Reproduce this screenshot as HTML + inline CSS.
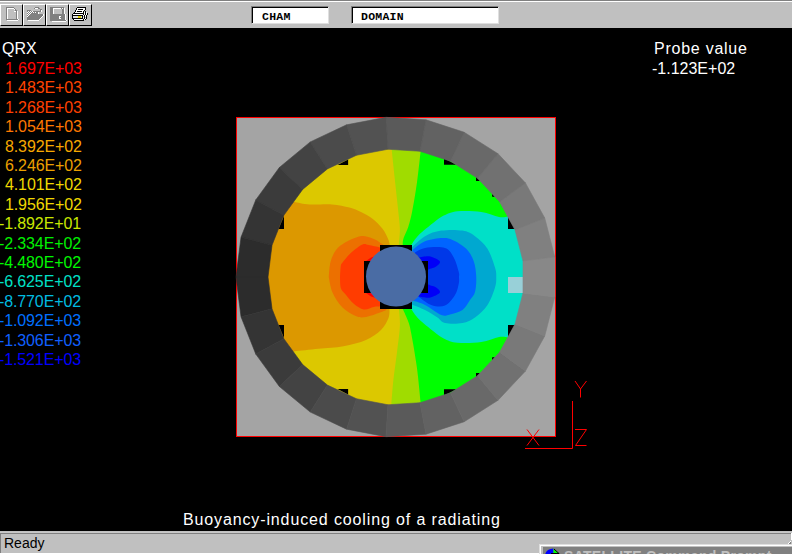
<!DOCTYPE html>
<html><head><meta charset="utf-8"><style>
html,body{margin:0;padding:0;}
body{width:792px;height:554px;background:#000;position:relative;overflow:hidden;font-family:"Liberation Sans",sans-serif;}
.abs{position:absolute;}
#tb{position:absolute;left:0;top:0;width:792px;height:28px;background:#c0c0c0;}
.btn{position:absolute;top:4px;width:23px;height:22px;background:#c0c0c0;box-sizing:border-box;border-top:1px solid #fff;border-left:1px solid #fff;border-right:1px solid #000;border-bottom:1px solid #000;}
.fld{position:absolute;top:6px;height:18px;box-sizing:border-box;background:#fff;border-top:1px solid #808080;border-left:1px solid #808080;border-right:1px solid #dfdfdf;border-bottom:1px solid #dfdfdf;}
.fld .in{position:absolute;left:0;top:0;right:0;bottom:0;border-top:1px solid #000;border-left:1px solid #000;}
.fld span{position:absolute;top:3px;font-family:"Liberation Mono",monospace;font-weight:bold;font-size:11.5px;letter-spacing:0.25px;line-height:14px;color:#000;}
.lg{position:absolute;font-size:16px;line-height:18px;white-space:nowrap;letter-spacing:-0.12px;}
.wt{position:absolute;color:#fff;font-size:16px;line-height:18px;white-space:nowrap;}
#sb{position:absolute;left:0;top:531px;width:792px;height:23px;background:#c0c0c0;}
</style></head><body>
<div id="tb">
 <div class="abs" style="left:0;top:0;width:792px;height:1px;background:#808080"></div>
 <div class="abs" style="left:0;top:1px;width:792px;height:1px;background:#fff"></div>
 <div class="btn" style="left:0"></div>
 <div class="btn" style="left:23px"></div>
 <div class="btn" style="left:46px"></div>
 <div class="btn" style="left:69px"></div>

 <svg width="100" height="28" style="position:absolute;left:0;top:0" shape-rendering="crispEdges"><rect x="6" y="7" width="8" height="1" fill="#808080"/><rect x="6" y="8" width="1" height="1" fill="#808080"/><rect x="7" y="8" width="7" height="1" fill="#ffffff"/><rect x="14" y="8" width="1" height="1" fill="#808080"/><rect x="6" y="9" width="1" height="1" fill="#808080"/><rect x="7" y="9" width="1" height="1" fill="#ffffff"/><rect x="14" y="9" width="1" height="1" fill="#ffffff"/><rect x="15" y="9" width="1" height="1" fill="#808080"/><rect x="6" y="10" width="1" height="1" fill="#808080"/><rect x="7" y="10" width="1" height="1" fill="#ffffff"/><rect x="15" y="10" width="2" height="1" fill="#808080"/><rect x="6" y="11" width="1" height="1" fill="#808080"/><rect x="7" y="11" width="1" height="1" fill="#ffffff"/><rect x="14" y="11" width="2" height="1" fill="#ffffff"/><rect x="16" y="11" width="1" height="1" fill="#808080"/><rect x="17" y="11" width="1" height="1" fill="#ffffff"/><rect x="6" y="12" width="1" height="1" fill="#808080"/><rect x="7" y="12" width="1" height="1" fill="#ffffff"/><rect x="16" y="12" width="1" height="1" fill="#808080"/><rect x="17" y="12" width="1" height="1" fill="#ffffff"/><rect x="6" y="13" width="1" height="1" fill="#808080"/><rect x="7" y="13" width="1" height="1" fill="#ffffff"/><rect x="16" y="13" width="1" height="1" fill="#808080"/><rect x="17" y="13" width="1" height="1" fill="#ffffff"/><rect x="6" y="14" width="1" height="1" fill="#808080"/><rect x="7" y="14" width="1" height="1" fill="#ffffff"/><rect x="16" y="14" width="1" height="1" fill="#808080"/><rect x="17" y="14" width="1" height="1" fill="#ffffff"/><rect x="6" y="15" width="1" height="1" fill="#808080"/><rect x="7" y="15" width="1" height="1" fill="#ffffff"/><rect x="16" y="15" width="1" height="1" fill="#808080"/><rect x="17" y="15" width="1" height="1" fill="#ffffff"/><rect x="6" y="16" width="1" height="1" fill="#808080"/><rect x="7" y="16" width="1" height="1" fill="#ffffff"/><rect x="16" y="16" width="1" height="1" fill="#808080"/><rect x="17" y="16" width="1" height="1" fill="#ffffff"/><rect x="6" y="17" width="1" height="1" fill="#808080"/><rect x="7" y="17" width="1" height="1" fill="#ffffff"/><rect x="16" y="17" width="1" height="1" fill="#808080"/><rect x="17" y="17" width="1" height="1" fill="#ffffff"/><rect x="6" y="18" width="1" height="1" fill="#808080"/><rect x="7" y="18" width="1" height="1" fill="#ffffff"/><rect x="16" y="18" width="1" height="1" fill="#808080"/><rect x="17" y="18" width="1" height="1" fill="#ffffff"/><rect x="6" y="19" width="12" height="1" fill="#808080"/><rect x="18" y="19" width="1" height="1" fill="#ffffff"/><rect x="7" y="20" width="11" height="1" fill="#ffffff"/><rect x="35" y="7" width="4" height="1" fill="#808080"/><rect x="34" y="8" width="1" height="1" fill="#808080"/><rect x="35" y="8" width="3" height="1" fill="#ffffff"/><rect x="38" y="8" width="2" height="1" fill="#808080"/><rect x="40" y="9" width="2" height="1" fill="#808080"/><rect x="27" y="10" width="4" height="1" fill="#808080"/><rect x="40" y="10" width="1" height="1" fill="#808080"/><rect x="41" y="10" width="1" height="1" fill="#ffffff"/><rect x="27" y="11" width="1" height="1" fill="#808080"/><rect x="28" y="11" width="1" height="1" fill="#ffffff"/><rect x="29" y="11" width="1" height="1" fill="#808080"/><rect x="30" y="11" width="1" height="1" fill="#ffffff"/><rect x="31" y="11" width="1" height="1" fill="#808080"/><rect x="32" y="11" width="1" height="1" fill="#ffffff"/><rect x="33" y="11" width="8" height="1" fill="#808080"/><rect x="41" y="11" width="1" height="1" fill="#ffffff"/><rect x="27" y="12" width="1" height="1" fill="#ffffff"/><rect x="28" y="12" width="1" height="1" fill="#808080"/><rect x="29" y="12" width="1" height="1" fill="#ffffff"/><rect x="30" y="12" width="1" height="1" fill="#808080"/><rect x="31" y="12" width="1" height="1" fill="#ffffff"/><rect x="32" y="12" width="1" height="1" fill="#808080"/><rect x="33" y="12" width="1" height="1" fill="#ffffff"/><rect x="34" y="12" width="1" height="1" fill="#808080"/><rect x="35" y="12" width="1" height="1" fill="#ffffff"/><rect x="36" y="12" width="2" height="1" fill="#808080"/><rect x="38" y="12" width="1" height="1" fill="#ffffff"/><rect x="27" y="13" width="1" height="1" fill="#808080"/><rect x="28" y="13" width="1" height="1" fill="#ffffff"/><rect x="29" y="13" width="1" height="1" fill="#808080"/><rect x="30" y="13" width="1" height="1" fill="#ffffff"/><rect x="31" y="13" width="7" height="1" fill="#808080"/><rect x="38" y="13" width="1" height="1" fill="#ffffff"/><rect x="27" y="14" width="1" height="1" fill="#ffffff"/><rect x="28" y="14" width="1" height="1" fill="#808080"/><rect x="29" y="14" width="1" height="1" fill="#ffffff"/><rect x="30" y="14" width="13" height="1" fill="#808080"/><rect x="43" y="14" width="1" height="1" fill="#ffffff"/><rect x="27" y="15" width="1" height="1" fill="#808080"/><rect x="28" y="15" width="1" height="1" fill="#ffffff"/><rect x="29" y="15" width="14" height="1" fill="#808080"/><rect x="43" y="15" width="1" height="1" fill="#ffffff"/><rect x="27" y="16" width="1" height="1" fill="#ffffff"/><rect x="28" y="16" width="14" height="1" fill="#808080"/><rect x="42" y="16" width="1" height="1" fill="#ffffff"/><rect x="27" y="17" width="14" height="1" fill="#808080"/><rect x="41" y="17" width="1" height="1" fill="#ffffff"/><rect x="27" y="18" width="13" height="1" fill="#808080"/><rect x="40" y="18" width="1" height="1" fill="#ffffff"/><rect x="27" y="19" width="12" height="1" fill="#808080"/><rect x="39" y="19" width="1" height="1" fill="#ffffff"/><rect x="28" y="20" width="11" height="1" fill="#ffffff"/><rect x="50" y="7" width="14" height="1" fill="#808080"/><rect x="50" y="8" width="3" height="1" fill="#808080"/><rect x="53" y="8" width="8" height="1" fill="#ffffff"/><rect x="61" y="8" width="1" height="1" fill="#808080"/><rect x="62" y="8" width="1" height="1" fill="#ffffff"/><rect x="63" y="8" width="1" height="1" fill="#808080"/><rect x="64" y="8" width="1" height="1" fill="#ffffff"/><rect x="50" y="9" width="3" height="1" fill="#808080"/><rect x="53" y="9" width="1" height="1" fill="#ffffff"/><rect x="54" y="9" width="8" height="1" fill="#c0c0c0"/><rect x="62" y="9" width="2" height="1" fill="#808080"/><rect x="64" y="9" width="1" height="1" fill="#ffffff"/><rect x="50" y="10" width="3" height="1" fill="#808080"/><rect x="53" y="10" width="1" height="1" fill="#ffffff"/><rect x="54" y="10" width="8" height="1" fill="#c0c0c0"/><rect x="62" y="10" width="2" height="1" fill="#808080"/><rect x="64" y="10" width="1" height="1" fill="#ffffff"/><rect x="50" y="11" width="3" height="1" fill="#808080"/><rect x="53" y="11" width="1" height="1" fill="#ffffff"/><rect x="54" y="11" width="8" height="1" fill="#c0c0c0"/><rect x="62" y="11" width="2" height="1" fill="#808080"/><rect x="64" y="11" width="1" height="1" fill="#ffffff"/><rect x="50" y="12" width="3" height="1" fill="#808080"/><rect x="53" y="12" width="1" height="1" fill="#ffffff"/><rect x="54" y="12" width="8" height="1" fill="#c0c0c0"/><rect x="62" y="12" width="2" height="1" fill="#808080"/><rect x="64" y="12" width="1" height="1" fill="#ffffff"/><rect x="50" y="13" width="3" height="1" fill="#808080"/><rect x="53" y="13" width="1" height="1" fill="#ffffff"/><rect x="54" y="13" width="8" height="1" fill="#c0c0c0"/><rect x="62" y="13" width="2" height="1" fill="#808080"/><rect x="64" y="13" width="1" height="1" fill="#ffffff"/><rect x="50" y="14" width="15" height="1" fill="#808080"/><rect x="65" y="14" width="1" height="1" fill="#ffffff"/><rect x="50" y="15" width="15" height="1" fill="#808080"/><rect x="65" y="15" width="1" height="1" fill="#ffffff"/><rect x="50" y="16" width="9" height="1" fill="#808080"/><rect x="59" y="16" width="2" height="1" fill="#ffffff"/><rect x="61" y="16" width="4" height="1" fill="#808080"/><rect x="65" y="16" width="1" height="1" fill="#ffffff"/><rect x="50" y="17" width="9" height="1" fill="#808080"/><rect x="59" y="17" width="1" height="1" fill="#ffffff"/><rect x="60" y="17" width="5" height="1" fill="#808080"/><rect x="65" y="17" width="1" height="1" fill="#ffffff"/><rect x="50" y="18" width="9" height="1" fill="#808080"/><rect x="59" y="18" width="2" height="1" fill="#ffffff"/><rect x="61" y="18" width="4" height="1" fill="#808080"/><rect x="65" y="18" width="1" height="1" fill="#ffffff"/><rect x="50" y="19" width="15" height="1" fill="#808080"/><rect x="65" y="19" width="1" height="1" fill="#ffffff"/><rect x="50" y="20" width="16" height="1" fill="#808080"/><rect x="66" y="20" width="1" height="1" fill="#ffffff"/><rect x="52" y="21" width="14" height="1" fill="#ffffff"/><rect x="77" y="7" width="9" height="1" fill="#000000"/><rect x="76" y="8" width="1" height="1" fill="#000000"/><rect x="77" y="8" width="8" height="1" fill="#ffffff"/><rect x="85" y="8" width="1" height="1" fill="#000000"/><rect x="76" y="9" width="1" height="1" fill="#000000"/><rect x="77" y="9" width="1" height="1" fill="#ffffff"/><rect x="78" y="9" width="5" height="1" fill="#000000"/><rect x="83" y="9" width="2" height="1" fill="#ffffff"/><rect x="85" y="9" width="1" height="1" fill="#000000"/><rect x="75" y="10" width="1" height="1" fill="#000000"/><rect x="76" y="10" width="8" height="1" fill="#ffffff"/><rect x="84" y="10" width="1" height="1" fill="#000000"/><rect x="75" y="11" width="1" height="1" fill="#000000"/><rect x="76" y="11" width="1" height="1" fill="#ffffff"/><rect x="77" y="11" width="5" height="1" fill="#000000"/><rect x="82" y="11" width="1" height="1" fill="#ffffff"/><rect x="83" y="11" width="1" height="1" fill="#000000"/><rect x="85" y="11" width="1" height="1" fill="#000000"/><rect x="74" y="12" width="1" height="1" fill="#000000"/><rect x="75" y="12" width="8" height="1" fill="#ffffff"/><rect x="83" y="12" width="1" height="1" fill="#000000"/><rect x="84" y="12" width="1" height="1" fill="#ffffff"/><rect x="85" y="12" width="1" height="1" fill="#000000"/><rect x="86" y="12" width="1" height="1" fill="#ffffff"/><rect x="73" y="13" width="11" height="1" fill="#000000"/><rect x="84" y="13" width="1" height="1" fill="#ffffff"/><rect x="85" y="13" width="1" height="1" fill="#000000"/><rect x="86" y="13" width="1" height="1" fill="#ffffff"/><rect x="87" y="13" width="1" height="1" fill="#000000"/><rect x="72" y="14" width="1" height="1" fill="#000000"/><rect x="73" y="14" width="10" height="1" fill="#ffffff"/><rect x="83" y="14" width="1" height="1" fill="#000000"/><rect x="84" y="14" width="1" height="1" fill="#ffffff"/><rect x="85" y="14" width="1" height="1" fill="#000000"/><rect x="86" y="14" width="1" height="1" fill="#ffffff"/><rect x="87" y="14" width="1" height="1" fill="#000000"/><rect x="72" y="15" width="11" height="1" fill="#000000"/><rect x="83" y="15" width="1" height="1" fill="#ffffff"/><rect x="84" y="15" width="1" height="1" fill="#000000"/><rect x="85" y="15" width="1" height="1" fill="#ffffff"/><rect x="86" y="15" width="1" height="1" fill="#000000"/><rect x="72" y="16" width="1" height="1" fill="#000000"/><rect x="73" y="16" width="5" height="1" fill="#dfdfdf"/><rect x="78" y="16" width="3" height="1" fill="#e0d000"/><rect x="81" y="16" width="1" height="1" fill="#dfdfdf"/><rect x="82" y="16" width="1" height="1" fill="#000000"/><rect x="84" y="16" width="1" height="1" fill="#000000"/><rect x="85" y="16" width="1" height="1" fill="#ffffff"/><rect x="86" y="16" width="1" height="1" fill="#000000"/><rect x="72" y="17" width="1" height="1" fill="#000000"/><rect x="73" y="17" width="5" height="1" fill="#dfdfdf"/><rect x="78" y="17" width="3" height="1" fill="#e0d000"/><rect x="81" y="17" width="1" height="1" fill="#dfdfdf"/><rect x="82" y="17" width="1" height="1" fill="#000000"/><rect x="83" y="17" width="1" height="1" fill="#ffffff"/><rect x="84" y="17" width="1" height="1" fill="#000000"/><rect x="86" y="17" width="1" height="1" fill="#000000"/><rect x="72" y="18" width="11" height="1" fill="#000000"/><rect x="84" y="18" width="1" height="1" fill="#000000"/><rect x="85" y="18" width="1" height="1" fill="#ffffff"/><rect x="86" y="18" width="1" height="1" fill="#000000"/><rect x="73" y="19" width="1" height="1" fill="#000000"/><rect x="74" y="19" width="9" height="1" fill="#ffffff"/><rect x="83" y="19" width="1" height="1" fill="#000000"/><rect x="84" y="19" width="1" height="1" fill="#ffffff"/><rect x="85" y="19" width="1" height="1" fill="#000000"/><rect x="74" y="20" width="10" height="1" fill="#000000"/></svg>
 <div class="fld" style="left:251px;width:78px"><div class="in"></div><span style="left:10px">CHAM</span></div>
 <div class="fld" style="left:351px;width:148px"><div class="in"></div><span style="left:9px">DOMAIN</span></div>
</div>
<div class="wt" style="left:2px;top:40px">QRX</div>
<div class="lg" style="top:60.0px;color:#ff0000;left:5px">1.697E+03</div>
<div class="lg" style="top:79.4px;color:#ff4400;left:5px">1.483E+03</div>
<div class="lg" style="top:98.8px;color:#ff4000;left:5px">1.268E+03</div>
<div class="lg" style="top:118.2px;color:#ff7800;left:5px">1.054E+03</div>
<div class="lg" style="top:137.6px;color:#f8a800;left:5px">8.392E+02</div>
<div class="lg" style="top:157.0px;color:#eca000;left:5px">6.246E+02</div>
<div class="lg" style="top:176.4px;color:#f0d800;left:5px">4.101E+02</div>
<div class="lg" style="top:195.8px;color:#f0d800;left:5px">1.956E+02</div>
<div class="lg" style="top:215.2px;color:#c8e800;left:-1px">-1.892E+01</div>
<div class="lg" style="top:234.6px;color:#00f000;left:-1px">-2.334E+02</div>
<div class="lg" style="top:254.0px;color:#00f800;left:-1px">-4.480E+02</div>
<div class="lg" style="top:273.4px;color:#00e0c8;left:-1px">-6.625E+02</div>
<div class="lg" style="top:292.8px;color:#00bce0;left:-1px">-8.770E+02</div>
<div class="lg" style="top:312.2px;color:#0070ff;left:-1px">-1.092E+03</div>
<div class="lg" style="top:331.6px;color:#1060ff;left:-1px">-1.306E+03</div>
<div class="lg" style="top:351.0px;color:#0000ff;left:-1px">-1.521E+03</div>
<div class="wt" style="left:654px;top:40px;letter-spacing:0.75px">Probe value</div>
<div class="wt" style="left:652px;top:60px">-1.123E+02</div>
<svg width="792" height="554" style="position:absolute;left:0;top:0">
<rect x="236.5" y="117.5" width="319" height="319" fill="#a4a4a4" stroke="#ff0000" stroke-width="1"/>
<defs><clipPath id="disc"><circle cx="396.0" cy="277.0" r="129.0"/></clipPath></defs>
<circle cx="396.0" cy="277.0" r="129.0" fill="#000"/>
<g clip-path="url(#disc)">
<rect x="260" y="140" width="140" height="280" fill="#dcc800"/>
<rect x="400" y="140" width="140" height="280" fill="#00ff00"/>
<path d="M250.00,190.00 L294.50,201.90 C297.00,202.32 303.25,203.98 309.50,204.40 C315.75,204.82 325.33,203.88 332.00,204.40 C338.67,204.92 344.67,206.23 349.50,207.50 C354.33,208.77 357.17,210.12 361.00,212.00 C364.83,213.88 368.92,215.96 372.50,218.75 C376.08,221.54 379.92,225.42 382.50,228.75 C385.08,232.08 386.83,236.29 388.00,238.75 C389.17,241.21 389.25,242.71 389.50,243.50 L392.00,277.00 L389.50,308.80 C389.33,310.33 389.92,314.47 388.50,318.00 C387.08,321.53 384.75,326.33 381.00,330.00 C377.25,333.67 372.25,337.29 366.00,340.00 C359.75,342.71 351.42,344.79 343.50,346.25 C335.58,347.71 326.62,347.92 318.50,348.75 C310.38,349.58 298.71,350.83 294.75,351.25 L250.00,360.00 Z" fill="#dc9800"/>
<path d="M391.00,135.00 L391.70,149.70 C392.28,155.23 394.00,171.68 395.20,182.90 C396.40,194.12 398.12,209.12 398.90,217.00 C399.68,224.88 399.90,225.78 399.90,230.20 C399.90,234.62 399.07,241.28 398.90,243.50 L399.00,277.00 L398.90,308.80 C399.07,311.63 400.22,318.55 399.90,325.80 C399.58,333.05 398.10,343.13 397.00,352.30 C395.90,361.47 394.23,372.27 393.30,380.80 C392.37,389.33 391.72,399.72 391.40,403.50 L391.00,420.00 L421.00,420.00 L420.70,403.50 C420.07,397.50 418.47,379.18 416.90,367.50 C415.32,355.82 412.67,340.98 411.25,333.40 C409.83,325.82 409.82,326.10 408.40,322.00 C406.97,317.90 403.65,311.00 402.70,308.80 L403.00,277.00 L402.70,243.50 C402.87,242.55 402.75,240.65 403.70,237.80 C404.65,234.95 406.98,230.82 408.40,226.40 C409.82,221.98 410.78,218.55 412.20,211.30 C413.62,204.05 415.48,193.00 416.90,182.90 C418.32,172.80 420.07,156.07 420.70,150.70 L421.00,135.00 Z" fill="#a0dc00"/>
<path d="M411.25,245.00 C412.50,243.33 415.00,238.75 418.75,235.00 C422.50,231.25 429.58,225.73 433.75,222.50 C437.92,219.27 439.79,217.47 443.75,215.60 C447.71,213.72 451.25,211.87 457.50,211.25 C463.75,210.63 474.33,210.96 481.25,211.90 C488.17,212.84 494.54,216.15 499.00,216.90 C503.46,217.65 506.50,216.48 508.00,216.40 L540.00,216.00 L540.00,338.00 L508.00,337.60 C506.50,337.52 503.46,336.35 499.00,337.10 C494.54,337.85 488.17,341.16 481.25,342.10 C474.33,343.04 463.75,343.37 457.50,342.75 C451.25,342.13 447.71,340.27 443.75,338.40 C439.79,336.52 437.92,334.73 433.75,331.50 C429.58,328.27 422.50,322.75 418.75,319.00 C415.00,315.25 412.50,310.67 411.25,309.00 Z" fill="#00e0c8"/>
<path d="M411.90,247.50 C414.08,245.62 420.11,239.07 425.00,236.25 C429.89,233.43 435.00,231.54 441.25,230.60 C447.50,229.66 456.88,229.66 462.50,230.60 C468.12,231.54 470.83,233.22 475.00,236.25 C479.17,239.28 484.17,243.54 487.50,248.75 C490.83,253.96 493.54,262.79 495.00,267.50 C496.46,272.21 496.25,273.67 496.25,277.00 C496.25,280.33 496.46,282.83 495.00,287.50 C493.54,292.17 490.83,300.00 487.50,305.00 C484.17,310.00 479.17,314.50 475.00,317.50 C470.83,320.50 467.50,322.08 462.50,323.00 C457.50,323.92 449.17,323.92 445.00,323.00 C440.83,322.08 440.83,319.67 437.50,317.50 C434.17,315.33 429.27,312.18 425.00,310.00 C420.73,307.82 414.08,305.33 411.90,304.40 Z" fill="#00a8d0"/>
<path d="M412.50,250.00 C414.58,248.54 420.00,243.25 425.00,241.25 C430.00,239.25 437.92,238.21 442.50,238.00 C447.08,237.79 448.54,238.21 452.50,240.00 C456.46,241.79 462.71,245.21 466.25,248.75 C469.79,252.29 472.08,256.54 473.75,261.25 C475.42,265.96 476.04,271.88 476.25,277.00 C476.46,282.12 476.04,288.17 475.00,292.00 C473.96,295.83 472.08,297.00 470.00,300.00 C467.92,303.00 465.83,307.60 462.50,310.00 C459.17,312.40 453.54,313.57 450.00,314.40 C446.46,315.23 445.42,316.57 441.25,315.00 C437.08,313.43 429.79,307.40 425.00,305.00 C420.21,302.60 414.58,301.33 412.50,300.60 Z" fill="#0064ff"/>
<path d="M415.00,252.50 C416.67,251.75 420.00,248.75 425.00,248.00 C430.00,247.25 440.21,246.42 445.00,248.00 C449.79,249.58 451.46,253.50 453.75,257.50 C456.04,261.50 457.88,268.75 458.75,272.00 C459.62,275.25 459.00,275.04 459.00,277.00 C459.00,278.96 459.42,280.75 458.75,283.75 C458.08,286.75 457.29,291.36 455.00,295.00 C452.71,298.64 448.96,303.93 445.00,305.60 C441.04,307.27 435.83,306.60 431.25,305.00 C426.67,303.40 419.79,297.50 417.50,296.00 Z" fill="#0038e8"/>
<path d="M418.75,257.50 C420.21,257.29 425.07,256.25 427.50,256.25 C429.93,256.25 431.22,256.59 433.30,257.50 C435.38,258.41 439.58,260.17 440.00,261.70 C440.42,263.23 437.47,265.52 435.80,266.70 C434.13,267.88 431.38,268.20 430.00,268.75 C428.62,269.30 427.92,269.79 427.50,270.00 L418.00,270.00 L418.75,257.50 Z" fill="#0000f8"/>
<path d="M427.50,284.00 C427.92,284.21 428.62,284.70 430.00,285.25 C431.38,285.80 434.13,286.12 435.80,287.30 C437.47,288.48 440.42,290.77 440.00,292.30 C439.58,293.83 435.38,295.59 433.30,296.50 C431.22,297.41 429.93,297.75 427.50,297.75 C425.07,297.75 420.21,296.71 418.75,296.50 L418.00,284.00 L427.50,284.00 Z" fill="#0000f8"/>
<path d="M328.75,277.00 C329.04,274.50 329.29,266.50 330.50,262.00 C331.71,257.50 333.58,253.25 336.00,250.00 C338.42,246.75 341.42,244.68 345.00,242.50 C348.58,240.32 354.17,237.94 357.50,236.90 C360.83,235.86 362.08,235.83 365.00,236.25 C367.92,236.67 372.18,238.15 375.00,239.40 C377.82,240.65 380.23,242.65 381.90,243.75 C383.57,244.85 384.48,245.62 385.00,246.00 L390.00,277.00 L386.25,310.00 C385.21,310.42 383.33,311.35 380.00,312.50 C376.67,313.65 370.21,316.27 366.25,316.90 C362.29,317.52 360.21,317.82 356.25,316.25 C352.29,314.68 346.46,311.46 342.50,307.50 C338.54,303.54 334.79,297.58 332.50,292.50 C330.21,287.42 329.38,279.58 328.75,277.00 Z" fill="#ec7000"/>
<path d="M340.00,277.00 C340.13,275.17 340.38,268.42 340.80,266.00 C341.22,263.58 340.76,264.75 342.50,262.50 C344.24,260.25 347.92,255.52 351.25,252.50 C354.58,249.48 359.58,245.65 362.50,244.40 C365.42,243.15 365.83,244.48 368.75,245.00 C371.67,245.52 377.29,246.67 380.00,247.50 C382.71,248.33 384.17,249.58 385.00,250.00 L390.00,277.00 L385.00,305.00 C384.17,305.21 381.88,305.93 380.00,306.25 C378.12,306.57 376.46,306.38 373.75,306.90 C371.04,307.42 367.08,309.92 363.75,309.40 C360.42,308.88 356.88,306.36 353.75,303.75 C350.62,301.14 347.16,296.38 345.00,293.75 C342.84,291.12 341.63,290.79 340.80,288.00 C339.97,285.21 340.13,278.83 340.00,277.00 Z" fill="#ff3c00"/>
<path d="M366,261 L372,261 L376,256 L371,257.5 Z" fill="#ff0000"/>
<path d="M366,293 L372,293 L376,298 L371,296.5 Z" fill="#ff0000"/>
<rect x="508" y="277" width="16" height="16" fill="#98d0d8"/>
</g>
<path d="M444.0,158.5 L444.0,164.8 L456.5,164.8Z" fill="#000"/>
<path d="M508.0,216.7 L508.0,228.9 L515.3,228.9Z" fill="#000"/>
<path d="M348.1,159.4 L348.1,165.0 L337.5,165.0Z" fill="#000"/>
<path d="M284.0,216.0 L284.0,229.0 L278.5,229.0Z" fill="#000"/>
<path d="M476.0,176.8 L476.0,181.0 L480.2,181.0Z" fill="#000"/>
<path d="M492.1,193.5 L492.1,196.8 L495.1,196.8Z" fill="#000"/>
<path d="M444.0,395.5 L444.0,389.2 L456.5,389.2Z" fill="#000"/>
<path d="M508.0,337.3 L508.0,325.1 L515.3,325.1Z" fill="#000"/>
<path d="M348.1,394.6 L348.1,389.0 L337.5,389.0Z" fill="#000"/>
<path d="M284.0,338.0 L284.0,325.0 L278.5,325.0Z" fill="#000"/>
<path d="M476.0,377.2 L476.0,373.0 L480.2,373.0Z" fill="#000"/>
<path d="M492.1,360.5 L492.1,357.2 L495.1,357.2Z" fill="#000"/>
<path d="M236.00,277.00 L241.03,316.79 L272.02,308.83 L268.00,277.00Z" fill="rgb(44,44,44)" stroke="rgb(44,44,44)" stroke-width="0.6"/>
<path d="M241.03,316.79 L255.79,354.08 L283.83,338.66 L272.02,308.83Z" fill="rgb(52,52,52)" stroke="rgb(52,52,52)" stroke-width="0.6"/>
<path d="M255.79,354.08 L279.37,386.53 L302.69,364.62 L283.83,338.66Z" fill="rgb(59,59,59)" stroke="rgb(59,59,59)" stroke-width="0.6"/>
<path d="M279.37,386.53 L310.27,412.09 L327.41,385.07 L302.69,364.62Z" fill="rgb(67,67,67)" stroke="rgb(67,67,67)" stroke-width="0.6"/>
<path d="M310.27,412.09 L346.56,429.17 L356.45,398.74 L327.41,385.07Z" fill="rgb(75,75,75)" stroke="rgb(75,75,75)" stroke-width="0.6"/>
<path d="M346.56,429.17 L385.95,436.68 L387.96,404.75 L356.45,398.74Z" fill="rgb(82,82,82)" stroke="rgb(82,82,82)" stroke-width="0.6"/>
<path d="M385.95,436.68 L425.98,434.17 L419.98,402.73 L387.96,404.75Z" fill="rgb(90,90,90)" stroke="rgb(90,90,90)" stroke-width="0.6"/>
<path d="M425.98,434.17 L464.12,421.77 L450.50,392.82 L419.98,402.73Z" fill="rgb(98,98,98)" stroke="rgb(98,98,98)" stroke-width="0.6"/>
<path d="M464.12,421.77 L497.99,400.28 L477.59,375.63 L450.50,392.82Z" fill="rgb(105,105,105)" stroke="rgb(105,105,105)" stroke-width="0.6"/>
<path d="M497.99,400.28 L525.44,371.05 L499.55,352.24 L477.59,375.63Z" fill="rgb(113,113,113)" stroke="rgb(113,113,113)" stroke-width="0.6"/>
<path d="M525.44,371.05 L544.76,335.90 L515.01,324.12 L499.55,352.24Z" fill="rgb(121,121,121)" stroke="rgb(121,121,121)" stroke-width="0.6"/>
<path d="M544.76,335.90 L554.74,297.05 L522.99,293.04 L515.01,324.12Z" fill="rgb(128,128,128)" stroke="rgb(128,128,128)" stroke-width="0.6"/>
<path d="M554.74,297.05 L554.74,256.95 L522.99,260.96 L522.99,293.04Z" fill="rgb(136,136,136)" stroke="rgb(136,136,136)" stroke-width="0.6"/>
<path d="M554.74,256.95 L544.76,218.10 L515.01,229.88 L522.99,260.96Z" fill="rgb(128,128,128)" stroke="rgb(128,128,128)" stroke-width="0.6"/>
<path d="M544.76,218.10 L525.44,182.95 L499.55,201.76 L515.01,229.88Z" fill="rgb(121,121,121)" stroke="rgb(121,121,121)" stroke-width="0.6"/>
<path d="M525.44,182.95 L497.99,153.72 L477.59,178.37 L499.55,201.76Z" fill="rgb(113,113,113)" stroke="rgb(113,113,113)" stroke-width="0.6"/>
<path d="M497.99,153.72 L464.12,132.23 L450.50,161.18 L477.59,178.37Z" fill="rgb(105,105,105)" stroke="rgb(105,105,105)" stroke-width="0.6"/>
<path d="M464.12,132.23 L425.98,119.83 L419.98,151.27 L450.50,161.18Z" fill="rgb(98,98,98)" stroke="rgb(98,98,98)" stroke-width="0.6"/>
<path d="M425.98,119.83 L385.95,117.32 L387.96,149.25 L419.98,151.27Z" fill="rgb(90,90,90)" stroke="rgb(90,90,90)" stroke-width="0.6"/>
<path d="M385.95,117.32 L346.56,124.83 L356.45,155.26 L387.96,149.25Z" fill="rgb(82,82,82)" stroke="rgb(82,82,82)" stroke-width="0.6"/>
<path d="M346.56,124.83 L310.27,141.91 L327.41,168.93 L356.45,155.26Z" fill="rgb(75,75,75)" stroke="rgb(75,75,75)" stroke-width="0.6"/>
<path d="M310.27,141.91 L279.37,167.47 L302.69,189.38 L327.41,168.93Z" fill="rgb(67,67,67)" stroke="rgb(67,67,67)" stroke-width="0.6"/>
<path d="M279.37,167.47 L255.79,199.92 L283.83,215.34 L302.69,189.38Z" fill="rgb(59,59,59)" stroke="rgb(59,59,59)" stroke-width="0.6"/>
<path d="M255.79,199.92 L241.03,237.21 L272.02,245.17 L283.83,215.34Z" fill="rgb(52,52,52)" stroke="rgb(52,52,52)" stroke-width="0.6"/>
<path d="M241.03,237.21 L236.00,277.00 L268.00,277.00 L272.02,245.17Z" fill="rgb(44,44,44)" stroke="rgb(44,44,44)" stroke-width="0.6"/>
<rect x="364" y="261" width="64" height="32" fill="#000"/>
<rect x="380" y="245" width="32" height="64" fill="#000"/>
<circle cx="396" cy="276.5" r="30" fill="#4a6ca4"/>
<g stroke="#ff0000" stroke-width="1" fill="none">
<path d="M572.5,401 V448.5 H525"/>
<path d="M575,381 L580.5,389 L586.5,381 M580.5,389 V397.5"/>
<path d="M527,429.5 L539,445.5 M539,429.5 L527,445.5"/>
<path d="M575,429.5 H586.5 L575.5,445.5 H586.5"/>
</g>
</svg>
<div class="wt" style="left:183px;top:511px;letter-spacing:0.87px">Buoyancy-induced cooling of a radiating</div>
<div id="sb">
 <div class="abs" style="left:0;top:1px;width:792px;height:1px;background:#c8c8c8"></div>
 <div class="abs" style="left:0;top:2px;width:792px;height:1px;background:#808080"></div>
 <div class="abs" style="left:0;top:2px;width:1px;height:20px;background:#808080"></div>
 <div class="abs" style="left:0;top:22px;width:792px;height:1px;background:#fff"></div>
 <div class="abs" style="left:791px;top:2px;width:1px;height:7px;background:#fff"></div>
 <svg width="8" height="8" style="position:absolute;left:784px;top:6px" shape-rendering="crispEdges"><rect x="4" y="6" width="1" height="1" fill="#fff"/><rect x="5" y="5" width="1" height="1" fill="#fff"/><rect x="6" y="4" width="1" height="1" fill="#fff"/><rect x="6" y="5" width="1" height="2" fill="#808080"/><rect x="5" y="6" width="1" height="1" fill="#808080"/></svg>
 <div class="abs" style="left:4px;top:5px;font-size:14px;line-height:15px;color:#000">Ready</div>
 <div class="abs" style="left:539px;top:13px;width:253px;height:10px;background:#dfdfdf"></div>
 <div class="abs" style="left:540px;top:14px;width:252px;height:9px;background:#fff"></div>
 <div class="abs" style="left:541px;top:15px;width:251px;height:8px;background:#c0c0c0"></div>
 <div class="abs" style="left:543px;top:16px;width:249px;height:7px;background:#808080;overflow:hidden">
   <svg width="20" height="8" style="position:absolute;left:0;top:0"><path d="M2,8 Q3,2 10.5,1.5 V8 Z" fill="#0000ff"/><path d="M10.5,1.5 L17,7.5 V8 H10.5 Z" fill="#00ff00"/><path d="M11,2 L16.5,7 M8,6.5 H16" stroke="#000" stroke-width="1" fill="none"/></svg>
   <div class="abs" style="left:21px;top:1px;font-size:14px;font-weight:bold;letter-spacing:0.3px;line-height:16px;color:#c0c0c0;white-space:nowrap">SATELLITE Command Prompt</div>
 </div>
</div>
</body></html>
